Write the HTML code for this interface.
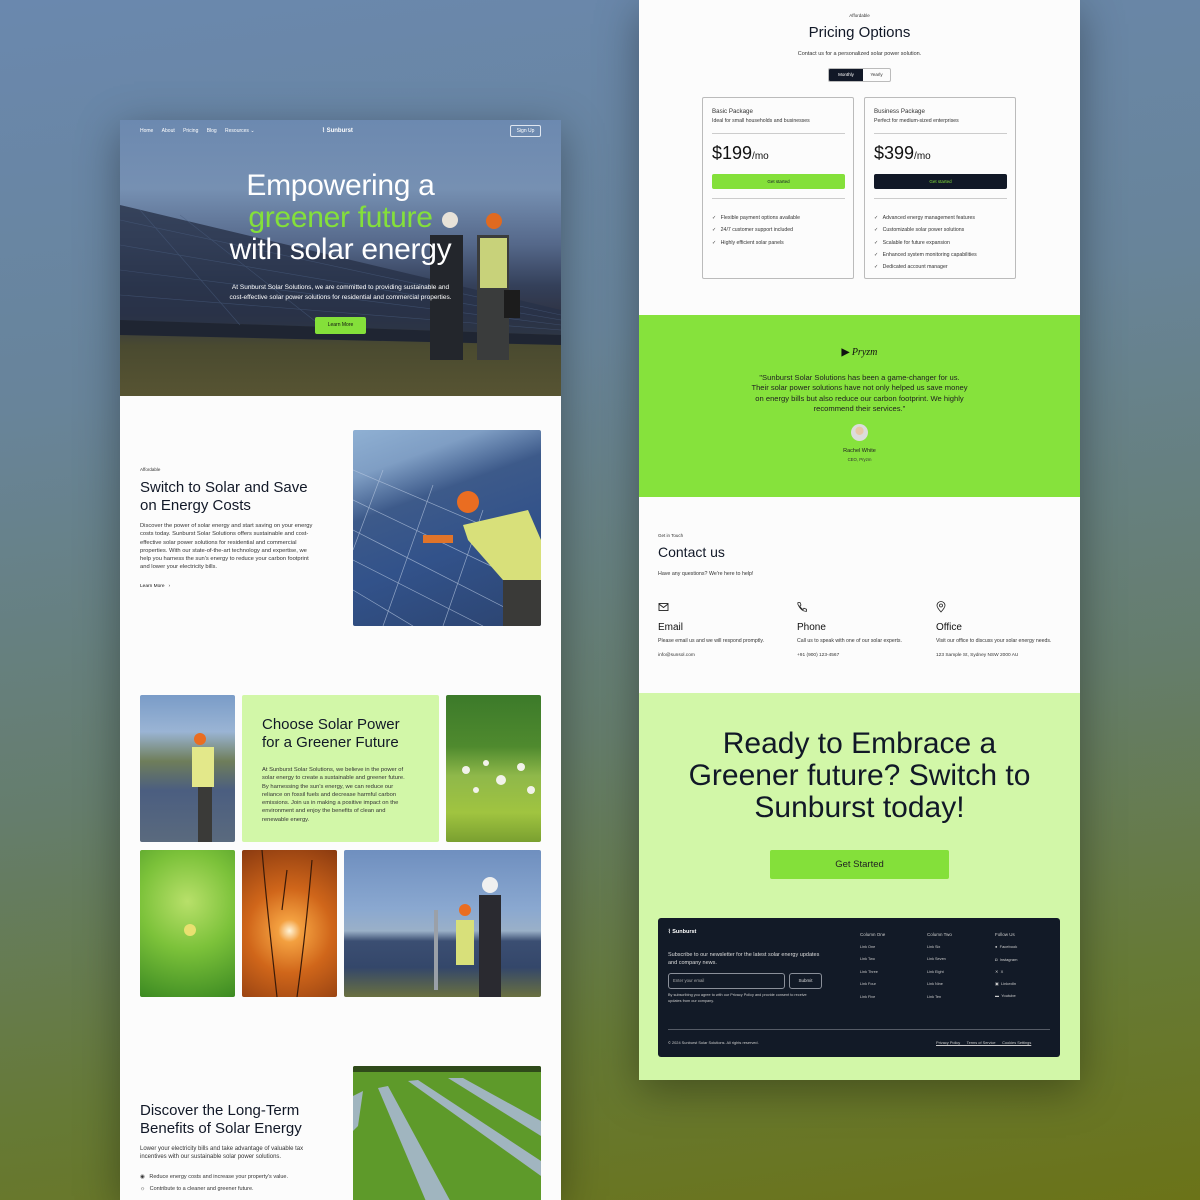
<!DOCTYPE html>
<html><head><meta charset="utf-8"><style>
*{margin:0;padding:0;box-sizing:border-box}
body{width:1200px;height:1200px;overflow:hidden;position:relative;font-family:"Liberation Sans",sans-serif;background:linear-gradient(172deg,#6a88ae 0%,#68849a 30%,#657d6c 60%,#667a36 82%,#6b7318 100%);color:#111827}
.a{position:absolute;white-space:nowrap}
.pg{position:absolute;background:#fcfcfc;box-shadow:0 10px 40px rgba(0,0,0,.35);overflow:hidden}
.img{position:absolute;border-radius:2px;overflow:hidden}
.t5{font-size:5px;color:#333}
.c{text-align:center}
</style></head><body>

<!-- LEFT PAGE -->
<div class="pg" style="left:120px;top:120px;width:441px;height:1080px">
  <div style="position:absolute;left:0;top:0;width:441px;height:276px;background:linear-gradient(180deg,#6c89b0 0%,#7690b2 25%,#55688a 45%,#34405a 60%,#2f3445 70%,#4a4a30 82%,#575432 100%)"></div>
  <svg style="position:absolute;left:0;top:0" width="441" height="276">
    <polygon points="0,85 441,190 441,215 0,200" fill="#283249" opacity=".8"/>
    <polygon points="0,200 441,215 441,225 0,215" fill="#1f2532"/>
    <g stroke="#4a5e80" stroke-width=".6" opacity=".6"><line x1="0" y1="100" x2="441" y2="195"/><line x1="0" y1="125" x2="441" y2="200"/><line x1="0" y1="150" x2="441" y2="205"/><line x1="0" y1="175" x2="441" y2="210"/><line x1="60" y1="95" x2="200" y2="205"/><line x1="20" y1="90" x2="120" y2="205"/></g>
    <rect x="310" y="115" width="33" height="125" fill="#23262c"/><circle cx="330" cy="100" r="8" fill="#e8e2d8"/>
    <rect x="357" y="115" width="32" height="125" fill="#3a3c3c"/><rect x="360" y="118" width="27" height="50" fill="#c8d27a"/><circle cx="374" cy="101" r="8" fill="#e06a20"/>
    <rect x="384" y="170" width="16" height="28" fill="#1c1c1c"/>
  </svg>
  <div class="a" style="left:20px;top:8px;font-size:5px;color:#fff">Home&nbsp;&nbsp;&nbsp;&nbsp;&nbsp;&nbsp;About&nbsp;&nbsp;&nbsp;&nbsp;&nbsp;&nbsp;Pricing&nbsp;&nbsp;&nbsp;&nbsp;&nbsp;&nbsp;Blog&nbsp;&nbsp;&nbsp;&nbsp;&nbsp;&nbsp;Resources ⌄</div>
  <div class="a" style="left:202px;top:7px;font-size:6px;color:#fff;font-weight:bold">⌇ Sunburst</div>
  <div class="a" style="left:390px;top:5px;width:31px;height:12px;border:1px solid #dfe6f0;border-radius:2px;font-size:5px;color:#fff;text-align:center;line-height:10px">Sign Up</div>
  <div class="a c" style="left:0;width:441px;top:50px;font-size:30px;line-height:32px;color:#fff;letter-spacing:-.3px">Empowering a<br><span style="color:#84e03a">greener future</span><br>with solar energy</div>
  <div class="a c" style="left:0;width:441px;top:163px;font-size:6.5px;line-height:9.5px;color:#fff">At Sunburst Solar Solutions, we are committed to providing sustainable and<br>cost-effective solar power solutions for residential and commercial properties.</div>
  <div class="a" style="left:195px;top:197px;width:51px;height:17px;background:#84e03a;border-radius:2px;font-size:5px;text-align:center;line-height:17px;color:#111">Learn More</div>

  <div class="a t5" style="left:20px;top:347px;font-size:4.5px">Affordable</div>
  <div class="a" style="left:20px;top:359px;font-size:15px;line-height:18px;color:#111827">Switch to Solar and Save<br>on Energy Costs</div>
  <div class="a" style="left:20px;top:402px;font-size:5.8px;line-height:8.3px;color:#333">Discover the power of solar energy and start saving on your energy<br>costs today. Sunburst Solar Solutions offers sustainable and cost-<br>effective solar power solutions for residential and commercial<br>properties. With our state-of-the-art technology and expertise, we<br>help you harness the sun's energy to reduce your carbon footprint<br>and lower your electricity bills.</div>
  <div class="a" style="left:20px;top:464px;font-size:4.8px;color:#111">Learn More &nbsp;&nbsp;›</div>
  <div class="img" style="left:233px;top:310px;width:188px;height:196px;background:linear-gradient(160deg,#8fb0d3 0%,#7f9ec4 18%,#3d5a8a 35%,#32528a 60%,#2c4470 100%)">
    <svg width="188" height="196"><g stroke="#b8c8e0" stroke-width=".7" opacity=".7"><line x1="0" y1="40" x2="188" y2="120"/><line x1="0" y1="70" x2="188" y2="160"/><line x1="0" y1="100" x2="188" y2="196"/><line x1="0" y1="130" x2="130" y2="196"/><line x1="0" y1="160" x2="60" y2="196"/><line x1="30" y1="40" x2="0" y2="120"/><line x1="80" y1="55" x2="30" y2="196"/><line x1="130" y1="80" x2="90" y2="196"/></g>
    <polygon points="110,95 175,80 188,110 188,160 150,150 115,110" fill="#d8e07a"/><circle cx="115" cy="72" r="11" fill="#ea6d21"/><rect x="70" y="105" width="30" height="8" fill="#e0742a"/><rect x="150" y="150" width="38" height="46" fill="#3a3a38"/></svg>
  </div>

  <div class="img" style="left:20px;top:575px;width:95px;height:147px;background:linear-gradient(180deg,#7a9cc8 0%,#9ab4d4 25%,#6f7e5a 45%,#4b5e80 65%,#5a6a7e 100%)"><svg width="95" height="147"><circle cx="60" cy="44" r="6" fill="#ea6d21"/><rect x="52" y="52" width="22" height="40" fill="#e3e88a"/><rect x="58" y="92" width="14" height="55" fill="#3a3a38"/></svg></div>
  <div class="img" style="left:122px;top:575px;width:197px;height:147px;background:#d2f7a8"></div>
  <div class="a" style="left:142px;top:596px;font-size:15px;line-height:18px;color:#111827">Choose Solar Power<br>for a Greener Future</div>
  <div class="a" style="left:142px;top:646px;font-size:5.8px;line-height:8.3px;color:#333">At Sunburst Solar Solutions, we believe in the power of<br>solar energy to create a sustainable and greener future.<br>By harnessing the sun's energy, we can reduce our<br>reliance on fossil fuels and decrease harmful carbon<br>emissions. Join us in making a positive impact on the<br>environment and enjoy the benefits of clean and<br>renewable energy.</div>
  <div class="img" style="left:326px;top:575px;width:95px;height:147px;background:linear-gradient(180deg,#3c7a2a 0%,#4f8a2e 35%,#8fb84a 55%,#a0c440 80%,#7aa030 100%)"><svg width="95" height="147"><g fill="#f2f2ea"><circle cx="20" cy="75" r="4"/><circle cx="40" cy="68" r="3"/><circle cx="55" cy="85" r="5"/><circle cx="75" cy="72" r="4"/><circle cx="85" cy="95" r="4"/><circle cx="30" cy="95" r="3"/></g></svg></div>
  <div class="img" style="left:20px;top:730px;width:95px;height:147px;background:radial-gradient(circle at 50% 35%,#b8e06a 0%,#7cc23a 45%,#3c8a22 100%)"><svg width="95" height="147"><circle cx="50" cy="80" r="6" fill="#e8e070"/></svg></div>
  <div class="img" style="left:122px;top:730px;width:95px;height:147px;background:radial-gradient(circle at 50% 55%,#fff4d8 0%,#f3a040 12%,#d0661a 45%,#8a3a10 100%)"><svg width="95" height="147"><g stroke="#3a1a08" stroke-width="1.2" fill="none"><path d="M20 0 C25 60 30 100 35 147"/><path d="M70 10 C65 70 60 110 55 147"/><path d="M45 20 L40 60"/></g></svg></div>
  <div class="img" style="left:224px;top:730px;width:197px;height:147px;background:linear-gradient(180deg,#6f8fbf 0%,#8aa8d0 40%,#9ab0c8 55%,#3b4e72 62%,#34476a 80%,#6a7040 100%)"><svg width="197" height="147"><rect x="135" y="45" width="22" height="102" fill="#2a2a30"/><circle cx="146" cy="35" r="8" fill="#f0f0f0"/><rect x="112" y="70" width="18" height="45" fill="#d8e07a"/><circle cx="121" cy="60" r="6" fill="#ea6d21"/><rect x="90" y="60" width="4" height="80" fill="#9aa0a8"/></svg></div>

  <div class="a" style="left:20px;top:982px;font-size:15px;line-height:18px;color:#111827">Discover the Long-Term<br>Benefits of Solar Energy</div>
  <div class="a" style="left:20px;top:1025px;font-size:6px;line-height:8.3px;color:#333">Lower your electricity bills and take advantage of valuable tax<br>incentives with our sustainable solar power solutions.</div>
  <div class="a" style="left:20px;top:1054px;font-size:5.5px;color:#333">◉ &nbsp;&nbsp;Reduce energy costs and increase your property's value.</div>
  <div class="a" style="left:20px;top:1066px;font-size:5.5px;color:#333">☼ &nbsp;&nbsp;Contribute to a cleaner and greener future.</div>
  <div class="img" style="left:233px;top:946px;width:188px;height:140px;background:#5e9a2a"><svg width="188" height="140"><rect width="188" height="6" fill="#2f4a1a"/><g fill="#a8b8d0" opacity=".9"><polygon points="25,22 35,20 100,140 75,140"/><polygon points="55,15 65,14 188,95 188,110"/><polygon points="95,12 110,12 188,55 188,70"/><polygon points="0,30 10,25 5,60 0,65"/></g></svg></div>
</div>

<!-- RIGHT PAGE -->
<div class="pg" style="left:639px;top:0;width:441px;height:1080px">
  <div class="a c t5" style="left:0;width:441px;top:13px;font-size:4.5px">Affordable</div>
  <div class="a c" style="left:0;width:441px;top:24px;font-size:15px;color:#111827">Pricing Options</div>
  <div class="a c" style="left:0;width:441px;top:51px;font-size:5.5px;color:#333">Contact us for a personalized solar power solution.</div>
  <div class="a" style="left:189px;top:68px;width:63px;height:14px;border:1px solid #bbb;border-radius:2px;overflow:hidden;font-size:4.5px;line-height:12px"><span style="display:inline-block;width:34px;background:#111827;color:#fff;text-align:center">Monthly</span><span style="display:inline-block;width:27px;text-align:center;color:#333">Yearly</span></div>

  <div class="a" style="left:63px;top:97px;width:152px;height:182px;border:1px solid #bbb;border-radius:2px"></div>
  <div class="a" style="left:225px;top:97px;width:152px;height:182px;border:1px solid #bbb;border-radius:2px"></div>
  <div class="a" style="left:73px;top:108px;font-size:6.2px;color:#333">Basic Package</div>
  <div class="a" style="left:73px;top:118px;font-size:5.2px;color:#333">Ideal for small households and businesses</div>
  <div class="a" style="left:73px;top:133px;width:133px;border-top:1px solid #ccc"></div>
  <div class="a" style="left:73px;top:143px;font-size:18px;color:#111">$199<span style="font-size:10px">/mo</span></div>
  <div class="a" style="left:73px;top:174px;width:133px;height:15px;background:#84e03a;border-radius:2px;font-size:4.5px;text-align:center;line-height:15px">Get started</div>
  <div class="a" style="left:73px;top:198px;width:133px;border-top:1px solid #ccc"></div>
  <div class="a" style="left:73px;top:212px;font-size:5.2px;line-height:12.3px;color:#333">✓ &nbsp;&nbsp;Flexible payment options available<br>✓ &nbsp;&nbsp;24/7 customer support included<br>✓ &nbsp;&nbsp;Highly efficient solar panels</div>

  <div class="a" style="left:235px;top:108px;font-size:6.2px;color:#333">Business Package</div>
  <div class="a" style="left:235px;top:118px;font-size:5.2px;color:#333">Perfect for medium-sized enterprises</div>
  <div class="a" style="left:235px;top:133px;width:133px;border-top:1px solid #ccc"></div>
  <div class="a" style="left:235px;top:143px;font-size:18px;color:#111">$399<span style="font-size:10px">/mo</span></div>
  <div class="a" style="left:235px;top:174px;width:133px;height:15px;background:#111827;border-radius:2px;font-size:4.5px;text-align:center;line-height:15px;color:#84e03a">Get started</div>
  <div class="a" style="left:235px;top:198px;width:133px;border-top:1px solid #ccc"></div>
  <div class="a" style="left:235px;top:212px;font-size:5.2px;line-height:12.3px;color:#333">✓ &nbsp;&nbsp;Advanced energy management features<br>✓ &nbsp;&nbsp;Customizable solar power solutions<br>✓ &nbsp;&nbsp;Scalable for future expansion<br>✓ &nbsp;&nbsp;Enhanced system monitoring capabilities<br>✓ &nbsp;&nbsp;Dedicated account manager</div>

  <div class="a" style="left:0;top:315px;width:441px;height:182px;background:#86e23c"></div>
  <div class="a c" style="left:0;width:441px;top:347px;font-size:10px;color:#111;font-style:italic;font-family:'Liberation Serif',serif"><b style="font-style:normal;font-family:'Liberation Sans'">▶</b> Pryzm</div>
  <div class="a c" style="left:0;width:441px;top:373px;font-size:7.6px;line-height:10.3px;color:#222">"Sunburst Solar Solutions has been a game-changer for us.<br>Their solar power solutions have not only helped us save money<br>on energy bills but also reduce our carbon footprint. We highly<br>recommend their services."</div>
  <div class="a" style="left:212px;top:424px;width:17px;height:17px;border-radius:50%;background:radial-gradient(circle at 50% 40%,#e8c8a8 0 30%,#dcdcdc 32%)"></div>
  <div class="a c" style="left:0;width:441px;top:448px;font-size:5.5px;color:#222">Rachel White</div>
  <div class="a c" style="left:0;width:441px;top:457px;font-size:4.3px;color:#333">CEO, Pryzm</div>

  <div class="a" style="left:19px;top:533px;font-size:4.5px;color:#333">Get in Touch</div>
  <div class="a" style="left:19px;top:544px;font-size:14px;color:#111827">Contact us</div>
  <div class="a" style="left:19px;top:571px;font-size:5.3px;color:#333">Have any questions? We're here to help!</div>
  <svg class="a" style="left:19px;top:602px" width="12" height="10"><rect x="1" y="1.5" width="9" height="7" fill="none" stroke="#222" stroke-width=".9"/><path d="M1 2 L5.5 5.5 L10 2" fill="none" stroke="#222" stroke-width=".9"/></svg>
  <svg class="a" style="left:157px;top:601px" width="12" height="12"><path d="M2 1.5 L4 1.5 L5 4 L3.8 5 Q5 7.5 7 8.5 L8 7.2 L10.5 8.3 L10.5 10.3 Q5 10.5 1.8 3 Z" fill="none" stroke="#222" stroke-width=".8"/></svg>
  <svg class="a" style="left:297px;top:601px" width="10" height="12"><path d="M5 11 Q1 6.5 1 4.5 A4 4 0 0 1 9 4.5 Q9 6.5 5 11Z" fill="none" stroke="#222" stroke-width=".8"/><circle cx="5" cy="4.5" r="1.5" fill="none" stroke="#222" stroke-width=".8"/></svg>
  <div class="a" style="left:19px;top:622px;font-size:10px;color:#111">Email</div>
  <div class="a" style="left:158px;top:622px;font-size:10px;color:#111">Phone</div>
  <div class="a" style="left:297px;top:622px;font-size:10px;color:#111">Office</div>
  <div class="a" style="left:19px;top:638px;font-size:5.2px;color:#333">Please email us and we will respond promptly.</div>
  <div class="a" style="left:158px;top:638px;font-size:5.2px;color:#333">Call us to speak with one of our solar experts.</div>
  <div class="a" style="left:297px;top:638px;font-size:5.2px;color:#333">Visit our office to discuss your solar energy needs.</div>
  <div class="a" style="left:19px;top:653px;font-size:4.8px;color:#333">info@sunsol.com</div>
  <div class="a" style="left:158px;top:653px;font-size:4.8px;color:#333">+91 (900) 123-4567</div>
  <div class="a" style="left:297px;top:653px;font-size:4.8px;color:#333">123 Sample St, Sydney NSW 2000 AU</div>

  <div class="a" style="left:0;top:693px;width:441px;height:387px;background:#d2f7a8"></div>
  <div class="a c" style="left:0;width:441px;top:728px;font-size:30px;line-height:32px;color:#111827">Ready to Embrace a<br>Greener future? Switch to<br>Sunburst today!</div>
  <div class="a" style="left:131px;top:850px;width:179px;height:29px;background:#84e03a;border-radius:2px;font-size:9.5px;text-align:center;line-height:29px;color:#222">Get Started</div>

  <div class="a" style="left:19px;top:918px;width:402px;height:139px;background:#121a27;border-radius:3px"></div>
  <div class="a" style="left:29px;top:929px;font-size:5.5px;color:#fff;font-weight:bold">⌇ Sunburst</div>
  <div class="a" style="left:29px;top:952px;font-size:5.5px;line-height:7.5px;color:#ddd">Subscribe to our newsletter for the latest solar energy updates<br>and company news.</div>
  <div class="a" style="left:29px;top:973px;width:117px;height:16px;border:1px solid #8a8f99;border-radius:3px;font-size:4.3px;color:#aaa;line-height:14px;padding-left:4px">Enter your email</div>
  <div class="a" style="left:150px;top:973px;width:33px;height:16px;border:1px solid #8a8f99;border-radius:3px;font-size:4.5px;color:#ddd;line-height:14px;text-align:center">Submit</div>
  <div class="a" style="left:29px;top:993px;font-size:3.8px;line-height:5.5px;color:#ccc">By subscribing you agree to with our Privacy Policy and provide consent to receive<br>updates from our company.</div>
  <div class="a" style="left:221px;top:929px;font-size:4.5px;line-height:11.5px;color:#ccc">Column One<br><span style="font-size:3.8px">Link One<br>Link Two<br>Link Three<br>Link Four<br>Link Five</span></div>
  <div class="a" style="left:288px;top:929px;font-size:4.5px;line-height:11.5px;color:#ccc">Column Two<br><span style="font-size:3.8px">Link Six<br>Link Seven<br>Link Eight<br>Link Nine<br>Link Ten</span></div>
  <div class="a" style="left:356px;top:929px;font-size:4.5px;line-height:12.3px;color:#ccc">Follow Us<br><span style="font-size:4px">● &nbsp;Facebook<br>◘ &nbsp;Instagram<br>✕ &nbsp;X<br>▣ &nbsp;LinkedIn<br>▬ &nbsp;Youtube</span></div>
  <div class="a" style="left:29px;top:1029px;width:382px;border-top:1px solid #555b66"></div>
  <div class="a" style="left:29px;top:1040px;font-size:3.9px;color:#ccc">© 2024 Sunburst Solar Solutions. All rights reserved.</div>
  <div class="a" style="left:297px;top:1040px;font-size:3.9px;color:#ccc;text-decoration:underline">Privacy Policy &nbsp;&nbsp;&nbsp;&nbsp; Terms of Service &nbsp;&nbsp;&nbsp;&nbsp; Cookies Settings</div>
</div>
</body></html>
